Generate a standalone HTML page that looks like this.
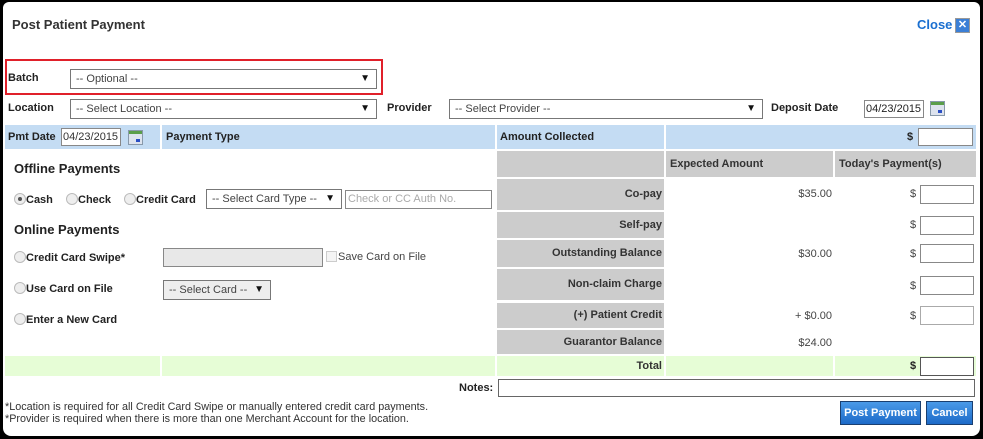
<!DOCTYPE html>
<html><head><meta charset="utf-8"><style>
*{box-sizing:border-box;margin:0;padding:0}
body{width:983px;height:439px;background:#000;font-family:"Liberation Sans",Arial,sans-serif;font-size:11px;color:#222;position:relative;overflow:hidden}
#f{position:absolute;left:3px;top:2px;width:977px;height:434px;background:#fff;border-radius:6px 6px 8px 8px}
.a{position:absolute}
.b{font-weight:bold}
.sel{position:absolute;border:1px solid #777;background:#fff;height:20px;line-height:18px;padding-left:5px;color:#444;font-size:11px}
.sel:after{content:"▼";position:absolute;right:6px;top:0;font-size:10px;color:#111}
.inp{position:absolute;border:1px solid #888;background:#fff;height:19px}
.blue{position:absolute;background:#c4dcf3}
.gray{position:absolute;background:#ccc;text-align:right;padding-right:2px;font-weight:bold;color:#333}
.green{position:absolute;background:#e6fdd6}
.rad{display:inline-block;width:12px;height:12px;border:1px solid #bbb;border-radius:50%;background:#eee;vertical-align:-2px;position:relative}
.rad.on:after{content:"";position:absolute;left:3px;top:3px;width:4px;height:4px;border-radius:50%;background:#555}
.cal{position:absolute;width:15px;height:15px;background:#dde3ee;border:1px solid #8899aa}
.cal:before{content:"";position:absolute;left:0;top:0;right:0;height:3px;background:#5a9e4a}
.cal:after{content:"";position:absolute;right:2px;bottom:2px;width:4px;height:3px;background:#2a4ec4}
.btn{position:absolute;background:linear-gradient(#4a9ae8,#1d6ac8);border:1px solid #1a3f70;color:#fff;font-weight:bold;font-size:11px;text-align:center;line-height:22px}
.r{position:absolute;text-align:right;color:#444}
</style></head><body><div id="f"></div>
<div class="a b" style="left:12px;top:17px;font-size:13px;color:#333">Post Patient Payment</div>
<div class="a b" style="left:917px;top:17px;font-size:13px;color:#1a6fd0">Close</div>
<div class="a" style="left:955px;top:18px;width:15px;height:15px;background:#3b7fd6;border:1px solid #999;color:#fff;font-size:11px;line-height:13px;text-align:center;font-weight:bold">✕</div>

<div class="a" style="left:5px;top:59px;width:378px;height:36px;border:2px solid #e0202a"></div>
<div class="a b" style="left:8px;top:72px">Batch</div>
<div class="sel" style="left:70px;top:69px;width:307px">-- Optional --</div>

<div class="a b" style="left:8px;top:102px">Location</div>
<div class="sel" style="left:70px;top:99px;width:307px">-- Select Location --</div>
<div class="a b" style="left:387px;top:102px">Provider</div>
<div class="sel" style="left:449px;top:99px;width:314px">-- Select Provider --</div>
<div class="a b" style="left:771px;top:102px">Deposit Date</div>
<div class="inp" style="left:864px;top:100px;width:60px;height:18px;line-height:16px;padding-left:1px">04/23/2015</div>
<div class="cal" style="left:930px;top:101px"></div>

<div class="blue" style="left:5px;top:125px;width:155px;height:24px"></div>
<div class="blue" style="left:162px;top:125px;width:333px;height:24px"></div>
<div class="blue" style="left:497px;top:125px;width:167px;height:24px"></div>
<div class="blue" style="left:666px;top:125px;width:310px;height:24px"></div>
<div class="a b" style="left:8px;top:131px">Pmt Date</div>
<div class="inp" style="left:61px;top:128px;width:60px;height:18px;line-height:16px;padding-left:1px;color:#333">04/23/2015</div>
<div class="cal" style="left:128px;top:130px"></div>
<div class="a b" style="left:166px;top:131px">Payment Type</div>
<div class="a b" style="left:500px;top:131px">Amount Collected</div>
<div class="a b" style="left:907px;top:131px">$</div>
<div class="inp" style="left:918px;top:128px;width:55px;height:18px"></div>

<div class="gray" style="left:497px;top:151px;width:167px;height:26px"></div>
<div class="gray" style="left:666px;top:151px;width:167px;height:26px;text-align:left;padding-left:4px;line-height:26px">Expected Amount</div>
<div class="gray" style="left:835px;top:151px;width:141px;height:26px;text-align:left;padding-left:4px;line-height:26px">Today's Payment(s)</div>

<div class="gray" style="left:497px;top:179px;width:167px;height:31px;line-height:31px">Co-pay</div>
<div class="gray" style="left:497px;top:212px;width:167px;height:26px;line-height:26px">Self-pay</div>
<div class="gray" style="left:497px;top:240px;width:167px;height:27px;line-height:27px">Outstanding Balance</div>
<div class="gray" style="left:497px;top:269px;width:167px;height:31px;line-height:31px">Non-claim Charge</div>
<div class="gray" style="left:497px;top:303px;width:167px;height:25px;line-height:25px">(+) Patient Credit</div>
<div class="gray" style="left:497px;top:330px;width:167px;height:24px;line-height:24px">Guarantor Balance</div>

<div class="r" style="left:732px;width:100px;top:188px">$35.00</div>
<div class="r" style="left:732px;width:100px;top:248px">$30.00</div>
<div class="r" style="left:732px;width:100px;top:310px">+ $0.00</div>
<div class="r" style="left:732px;width:100px;top:337px">$24.00</div>

<div class="a" style="left:910px;top:188px;color:#444">$</div><div class="inp" style="left:920px;top:185px;width:54px"></div>
<div class="a" style="left:910px;top:219px;color:#444">$</div><div class="inp" style="left:920px;top:216px;width:54px"></div>
<div class="a" style="left:910px;top:248px;color:#444">$</div><div class="inp" style="left:920px;top:244px;width:54px"></div>
<div class="a" style="left:910px;top:280px;color:#444">$</div><div class="inp" style="left:920px;top:276px;width:54px"></div>
<div class="a" style="left:910px;top:310px;color:#444">$</div><div class="inp" style="left:920px;top:306px;width:54px;border-color:#aaa"></div>

<div class="green" style="left:5px;top:356px;width:155px;height:20px"></div>
<div class="green" style="left:162px;top:356px;width:333px;height:20px"></div>
<div class="green b" style="left:497px;top:356px;width:167px;height:20px;text-align:right;padding-right:2px;line-height:20px;color:#333">Total</div>
<div class="green" style="left:666px;top:356px;width:167px;height:20px"></div>
<div class="green" style="left:835px;top:356px;width:141px;height:20px"></div>
<div class="a b" style="left:910px;top:360px">$</div>
<div class="inp" style="left:920px;top:357px;width:54px;border-color:#555"></div>

<div class="a b" style="left:459px;top:382px">Notes:</div>
<div class="inp" style="left:498px;top:379px;width:477px;height:18px;border-color:#666"></div>

<div class="a b" style="left:14px;top:161px;font-size:13px">Offline Payments</div>
<div class="a b" style="left:14px;top:193px"><span class="rad on"></span>Cash</div>
<div class="a b" style="left:66px;top:193px"><span class="rad"></span>Check</div>
<div class="a b" style="left:124px;top:193px"><span class="rad"></span>Credit Card</div>
<div class="sel" style="left:206px;top:189px;width:136px">-- Select Card Type --</div>
<div class="inp" style="left:345px;top:190px;width:147px;color:#aaa;padding-left:2px;line-height:16px">Check or CC Auth No.</div>
<div class="a b" style="left:14px;top:222px;font-size:13px">Online Payments</div>
<div class="a b" style="left:14px;top:251px"><span class="rad"></span>Credit Card Swipe*</div>
<div class="inp" style="left:163px;top:248px;width:160px;background:#e8e8e8;border-color:#888"></div>
<div class="a" style="left:326px;top:251px;color:#444"><span style="display:inline-block;width:11px;height:11px;border:1px solid #ccc;background:#f4f4f4;vertical-align:-2px;margin-right:1px"></span>Save Card on File</div>
<div class="a b" style="left:14px;top:282px"><span class="rad"></span>Use Card on File</div>
<div class="sel" style="left:163px;top:280px;width:108px;background:#eee">-- Select Card --</div>
<div class="a b" style="left:14px;top:313px"><span class="rad"></span>Enter a New Card</div>

<div class="a" style="left:5px;top:401px;font-size:10.8px;color:#333;line-height:12px">*Location is required for all Credit Card Swipe or manually entered credit card payments.<br>*Provider is required when there is more than one Merchant Account for the location.</div>

<div class="btn" style="left:840px;top:401px;width:81px;height:24px">Post Payment</div>
<div class="btn" style="left:926px;top:401px;width:47px;height:24px">Cancel</div>
</body></html>
